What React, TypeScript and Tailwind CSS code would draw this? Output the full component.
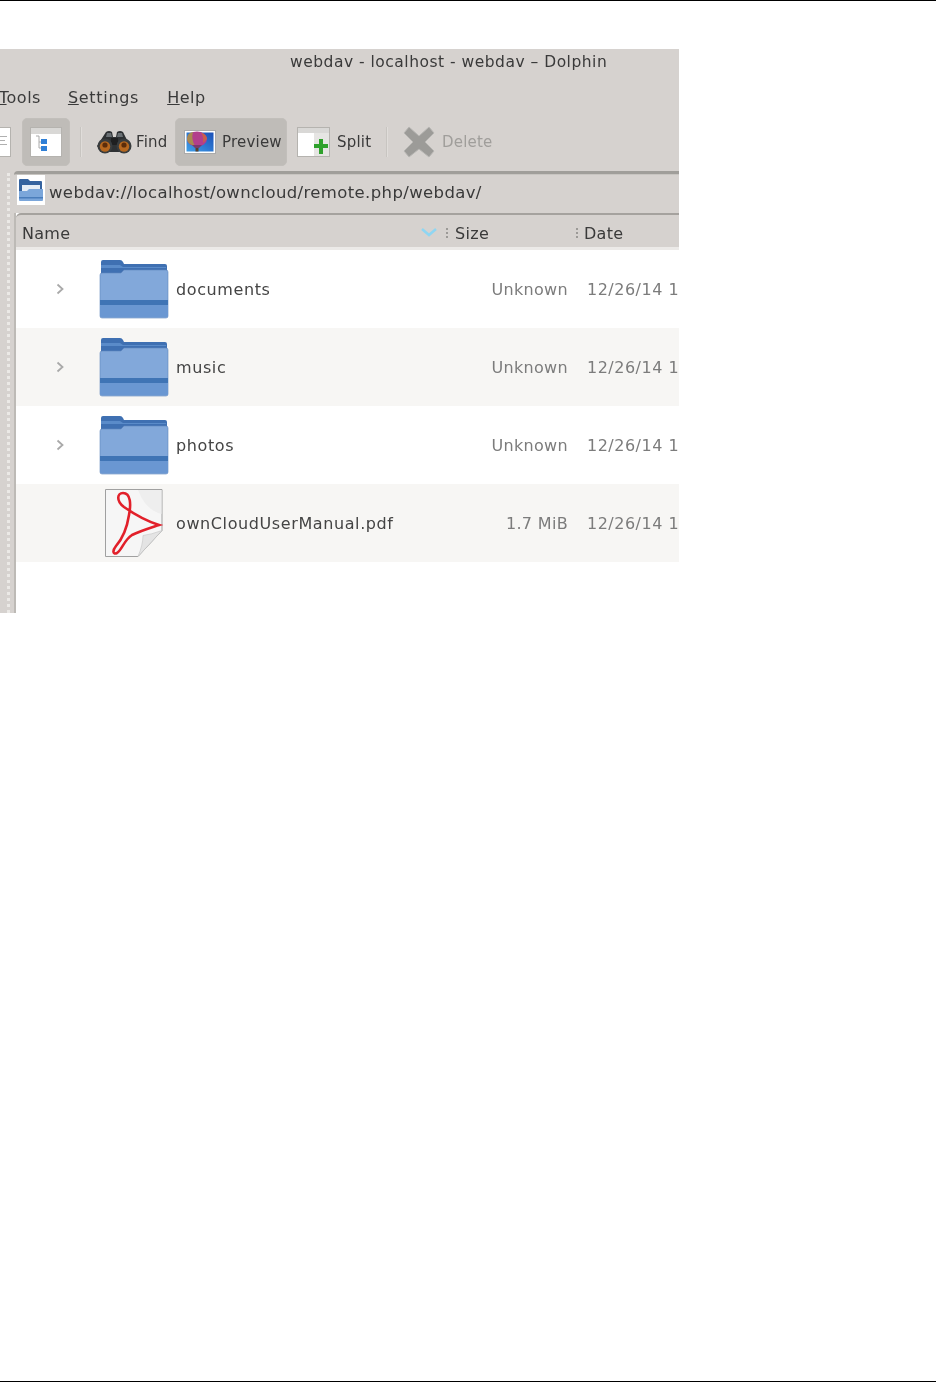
const rows = [
  { name: 'documents', size: 'Unknown', kind: 'folder' },
  { name: 'music', size: 'Unknown', kind: 'folder' },
  { name: 'photos', size: 'Unknown', kind: 'folder' },
  { name: 'ownCloudUserManual.pdf', size: '1.7 MiB', kind: 'pdf' },
];

function FolderIcon() {
  return (
    <svg className="shrink-0" width="70" height="60" viewBox="0 0 70 60">
      <path d="M2 3q0-2 2-2h17q2 0 3 2l1 2h41q2 0 2 2v8H2z" fill="#3f70b2" />
      <path d="M2 6h19l3 2h43v1H2z" fill="#5a8bc9" />
      <path d="M1 16q0-2 2-2h19l3-3h42q2 0 2 2v44q0 2-2 2H3q-2 0-2-2z" fill="#82a8da" stroke="#5f87bd" strokeWidth="0.6" />
      <rect x="1" y="41" width="68" height="5" fill="#3f74b5" />
      <rect x="1" y="46" width="68" height="12" rx="1" fill="#6a97d2" />
    </svg>
  );
}

function PdfIcon() {
  return (
    <svg className="ml-[5px] shrink-0" width="60" height="70" viewBox="0 0 60 70">
      <path d="M1.500 1.500h56.500v41l-24 26H1.500z" fill="#f6f6f6" stroke="#a0a0a0" />
      <path d="M34 2l23.500 0v24q-16-4-23.500-24z" fill="#eeeeee" />
      <path d="M58 42.500q-11 4-19 5 0 9-5 21z" fill="#e4e4e4" stroke="#c4c4c4" strokeWidth="0.6" />
      <path
        d="M55 37C42 33 30 26 20 19C12 13 13 5 19 5C27 5 27 17 25 27C23 40 19 50 12 58C8 63 9 67 13 65C18 62 20 52 28 47C36 43 46 40 55 37z"
        fill="none"
        stroke="#e2202a"
        strokeWidth="2.600"
      />
    </svg>
  );
}

function ListIcon() {
  return (
    <svg width="32" height="30" viewBox="0 0 32 30">
      <rect x="0.500" y="0.500" width="31" height="29" fill="#fff" stroke="#b5b3af" />
      <rect x="1" y="1" width="30" height="6" fill="#d9d8d6" />
      <path d="M6 9h3v12h3M9 15h3" fill="none" stroke="#aaa" />
      <rect x="11" y="12" width="6" height="5" fill="#2f7fd6" />
      <rect x="11" y="19" width="6" height="5" fill="#2f7fd6" />
    </svg>
  );
}

function BinocularsIcon() {
  return (
    <svg width="35" height="24" viewBox="0 0 35 24">
      <path d="M9 2q3-2 6 0l1 5h3l1-5q3-2 6 0l7 14-3 6H4l-4-6z" fill="#2e3133" />
      <path d="M10 3h4l1 4h-6zM21 3h4l1 4h-6z" fill="#6a7074" />
      <rect x="14" y="8" width="7" height="7" fill="#1e1f20" />
      <circle cx="8" cy="16" r="7.500" fill="#383c3e" />
      <circle cx="27" cy="16" r="7.500" fill="#383c3e" />
      <circle cx="8" cy="16.500" r="5.200" fill="#b5671f" />
      <circle cx="27" cy="16.500" r="5.200" fill="#b5671f" />
      <circle cx="8" cy="15" r="2.600" fill="#5b2c0a" />
      <circle cx="27" cy="15" r="2.600" fill="#5b2c0a" />
    </svg>
  );
}

function PreviewIcon() {
  return (
    <svg width="32" height="24" viewBox="0 0 32 24">
      <defs>
        <linearGradient id="sky" x1="1" y1="0" x2="0" y2="1">
          <stop offset="0" stopColor="#1a4fb8" />
          <stop offset="1" stopColor="#3f9fe8" />
        </linearGradient>
      </defs>
      <rect x="0.500" y="0.500" width="31" height="23" fill="#fff" stroke="#aaa" />
      <rect x="2.500" y="2.500" width="27" height="19" fill="url(#sky)" />
      <ellipse cx="13" cy="9" rx="10" ry="7.500" fill="#b23f8c" />
      <path d="M3 9q0-6 6-7-2 7 2 14-8-2-8-7z" fill="#a88a50" />
      <path d="M17 2.500q6 2 6 6.500l-4 4q1-6-2-10.500z" fill="#c9604a" />
      <path d="M8 15h10l-3 3h-4z" fill="#7a3a6c" />
      <rect x="11.500" y="18" width="3" height="3.500" fill="#5a4028" />
    </svg>
  );
}

function SplitIcon() {
  return (
    <svg width="33" height="30" viewBox="0 0 33 30">
      <rect x="0.500" y="0.500" width="32" height="29" fill="#fff" stroke="#b5b3af" />
      <rect x="1" y="1" width="31" height="5" fill="#d9d8d6" />
      <rect x="17" y="6" width="15" height="23" fill="#e6e5e3" />
      <path d="M22 12h4v5h5v4h-5v6h-4v-6h-5v-4h5z" fill="#2fa12c" />
    </svg>
  );
}

function DeleteIcon() {
  return (
    <svg width="32" height="32" viewBox="0 0 32 32">
      <path d="M6 1l10 9 10-9 5 6-9 9 9 9-5 6-10-8-10 8-5-6 9-9-9-9z" fill="#9c9b98" stroke="#b7b6b3" />
    </svg>
  );
}

function OpenFolderIcon() {
  return (
    <svg width="24" height="24" viewBox="0 0 24 24">
      <path d="M0 2q0-1 1-1h8l2 2h11q1 0 1 1v12H0z" fill="#35639f" />
      <rect x="3" y="7" width="18" height="6" fill="#e6edf6" />
      <path d="M0 13h8l2-2h14v11q0 1-1 1H1q-1 0-1-1z" fill="#7ba6da" />
      <rect x="0" y="19" width="24" height="1.500" fill="#4a7dbb" />
    </svg>
  );
}

function Separator() {
  return <div className="h-[30px] w-[2px] border-r border-[#e0ddda] bg-[#c8c5c1]"></div>;
}

function HeaderGrip() {
  return (
    <svg className="shrink-0" width="2" height="11" viewBox="0 0 2 11">
      <rect y="0" width="2" height="2" fill="#9c9a97" />
      <rect y="4" width="2" height="2" fill="#9c9a97" />
      <rect y="8" width="2" height="2" fill="#9c9a97" />
    </svg>
  );
}

export default function App() {
  return (
    <div
      className="flex h-[1382px] w-[936px] flex-col justify-between overflow-hidden border-t border-b border-black bg-white"
      style={{ fontFamily: '"DejaVu Sans", sans-serif' }}
    >
      <div className="mt-[48px] flex h-[564px] w-[679px] flex-col overflow-hidden bg-[#d6d2cf] text-[#3a3a3a] blur-[0.4px]">
        {/* Title */}
        <div className="h-[26px] pt-[2px] pl-[290px] text-[15.500px] leading-[22px] tracking-[0.5px] whitespace-nowrap">
          webdav - localhost - webdav – Dolphin
        </div>

        {/* Menu */}
        <div className="flex h-[43px] items-center gap-[28px] pt-[3px] text-[16px] leading-[20px] tracking-[0.5px]">
          <span className="-ml-[1px]"><span className="underline">T</span>ools</span>
          <span className="-ml-[1px] tracking-[0.7px]"><span className="underline">S</span>ettings</span>
          <span><span className="underline">H</span>elp</span>
        </div>

        {/* Toolbar */}
        <div className="flex h-[48px] items-center text-[15px] tracking-[0.2px] whitespace-nowrap">
          <div className="flex h-[30px] w-[11px] flex-col items-start gap-[3px] border border-l-0 border-[#b5b3af] bg-white pt-[8px]">
            <div className="h-px w-[7px] bg-[#b0b0b0]"></div>
            <div className="h-px w-[5px] bg-[#b0b0b0]"></div>
            <div className="h-px w-[7px] bg-[#b0b0b0]"></div>
          </div>
          <div className="ml-[11px] flex h-[48px] w-[48px] items-center justify-center rounded-[5px] border border-[#c2bfbb] bg-[#bfbcb8]">
            <ListIcon />
          </div>
          <div className="ml-[10px]"><Separator /></div>
          <div className="ml-[15px]"><BinocularsIcon /></div>
          <span className="ml-[4px] w-[39px]">Find</span>
          <div className="flex h-[48px] w-[112px] items-center rounded-[5px] border border-[#c2bfbb] bg-[#bfbcb8] pl-[8px]">
            <PreviewIcon />
            <span className="ml-[6px]">Preview</span>
          </div>
          <div className="ml-[10px]"><SplitIcon /></div>
          <span className="ml-[7px] w-[49px]">Split</span>
          <Separator />
          <div className="ml-[15px]"><DeleteIcon /></div>
          <span className="ml-[7px] text-[#a09e9b]">Delete</span>
        </div>

        <div className="mt-[5px] flex flex-1">
          {/* Places grip */}
          <div className="w-[14px] shrink-0 pt-[2px]">
            <div className="ml-[7px] h-full w-[3px] border-l-[3px] border-dotted border-[#ebe9e6]"></div>
          </div>

          <div className="flex flex-1 flex-col">
            {/* Location bar */}
            <div className="h-[4px] rounded-tl-[6px] border-t-[3px] border-[#a09e9a] bg-[#c8c5c1]"></div>
            <div className="flex h-[38px] items-start whitespace-nowrap">
              <div className="ml-[3px] flex h-[30px] w-[28px] items-center justify-center bg-white">
                <OpenFolderIcon />
              </div>
              <span className="ml-[4px] text-[16.500px] leading-[36px] tracking-[0.37px]">webdav://localhost/owncloud/remote.php/webdav/</span>
            </div>

            {/* File list */}
            <div className="flex flex-1 flex-col border-l-2 border-[#bdbab6] bg-white">
              <div className="flex h-[37px] items-center rounded-tl-[5px] border-t-2 border-b-[3px] border-t-[#a5a29e] border-b-[#eceae8] bg-[#d6d2cf] pt-[5px] text-[16px] tracking-[0.3px]">
                <span className="ml-[6px] w-[399px]">Name</span>
                <svg className="-mt-[3px] shrink-0" width="16" height="9" viewBox="0 0 16 9">
                  <path d="M1 1l7 6 7-6" fill="none" stroke="#8fd6f2" strokeWidth="2.500" />
                </svg>
                <div className="ml-[9px]"><HeaderGrip /></div>
                <span className="ml-[7px] w-[121px]">Size</span>
                <HeaderGrip />
                <span className="ml-[6px]">Date</span>
              </div>
              {rows.map((row, i) => (
                <div
                  key={row.name}
                  className={`flex h-[78px] shrink-0 items-center overflow-hidden text-[16px] whitespace-nowrap ${i % 2 ? 'bg-[#f7f6f4]' : 'bg-white'}`}
                >
                  <div className="flex w-[83px] shrink-0 pl-[40px]">
                    {row.kind === 'folder' && (
                      <svg width="8" height="12" viewBox="0 0 8 12">
                        <path d="M1.500 1.500l5 4.500-5 4.500" fill="none" stroke="#a9a9a9" strokeWidth="1.800" />
                      </svg>
                    )}
                  </div>
                  <div className="flex w-[77px] shrink-0">
                    {row.kind === 'folder' ? <FolderIcon /> : <PdfIcon />}
                  </div>
                  <span className="mt-[2px] w-[310px] tracking-[0.6px] text-[#444]">{row.name}</span>
                  <span className="mt-[2px] w-[82px] text-right tracking-[0.33px] text-[#7c7c7c]">{row.size}</span>
                  <span className="mt-[2px] ml-[19px] tracking-[0.5px] text-[#7c7c7c]">12/26/14 1</span>
                </div>
              ))}
            </div>
          </div>
        </div>
      </div>
    </div>
  );
}
